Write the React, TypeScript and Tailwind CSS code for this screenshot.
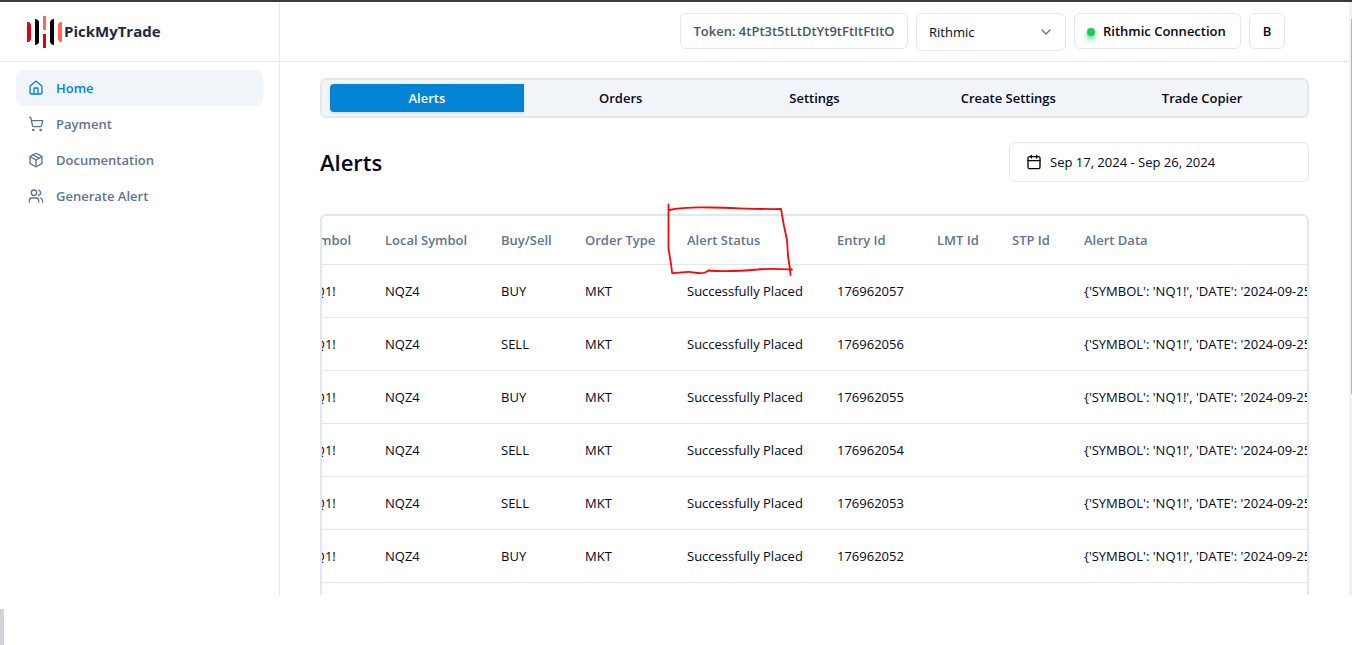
import React, { useLayoutEffect, useRef } from "react";
import {
  Calendar,
  ChevronDown,
  House,
  Package,
  ShoppingCart,
  Users,
} from "lucide-react";

const navItems = [
  { label: "Home", icon: House, active: true },
  { label: "Payment", icon: ShoppingCart },
  { label: "Documentation", icon: Package },
  { label: "Generate Alert", icon: Users },
];

const tabs = ["Alerts", "Orders", "Settings", "Create Settings", "Trade Copier"];

const columns = [
  { title: "Symbol", width: "w-[80px]" },
  { title: "Local Symbol", width: "w-[116px]" },
  { title: "Buy/Sell", width: "w-[84px]" },
  { title: "Order Type", width: "w-[102px]" },
  { title: "Alert Status", width: "w-[150px]" },
  { title: "Entry Id", width: "w-[100px]" },
  { title: "LMT Id", width: "w-[75px]" },
  { title: "STP Id", width: "w-[72px]" },
  { title: "Alert Data", width: "w-[640px]" },
];

const alerts = [
  { side: "BUY", entryId: "176962057" },
  { side: "SELL", entryId: "176962056" },
  { side: "BUY", entryId: "176962055" },
  { side: "SELL", entryId: "176962054" },
  { side: "SELL", entryId: "176962053" },
  { side: "BUY", entryId: "176962052" },
  { side: "SELL", entryId: "176962051" },
];

function Logo() {
  return (
    <svg width="36" height="32" viewBox="0 0 36 32" aria-hidden="true">
      <path d="M0 6h1.500q2.500 1 2.500 3v14q0 2-2.500 3H0z" fill="#d9040f" />
      <path d="M8 3h1q3 1 3 3v20q0 2-3 3H8z" fill="#050505" />
      <path d="M16 0h3v14h-3z" fill="#ff665c" />
      <path d="M16 18h3v14h-3z" fill="#d9040f" />
      <path d="M27 3h-1q-3 1-3 3v20q0 2 3 3h1z" fill="#050505" />
      <path d="M35 6h-1.500q-2.500 1-2.500 3v14q0 2 2.500 3h1.500z" fill="#ff665c" />
    </svg>
  );
}

function Sidebar() {
  return (
    <aside className="w-[280px] shrink-0 border-r border-slate-200">
      <div className="flex h-[60px] items-center border-b border-slate-200 px-[27px]">
        <a href="#" className="flex items-center gap-px text-[15px] font-bold text-slate-800">
          <Logo />
          <span>PickMyTrade</span>
        </a>
      </div>
      <nav className="px-4 py-2 text-[13px]/[21px] font-semibold">
        {navItems.map(({ label, icon: Icon, active }) => (
          <a
            key={label}
            href="#"
            className={
              active
                ? "flex h-9 items-center gap-3 rounded-lg bg-slate-100 px-3 text-[#0284d4]"
                : "flex h-9 items-center gap-3 rounded-lg px-3 text-slate-500"
            }
          >
            <Icon size={16} />
            {label}
          </a>
        ))}
      </nav>
    </aside>
  );
}

function Header() {
  return (
    <header className="flex h-[60px] shrink-0 items-center justify-end border-b border-slate-200 pr-16">
      <div className="flex items-start gap-2 text-[13px]/[21px]">
        <button className="h-9 w-[228px] rounded-md border border-slate-200 pt-0.5 font-semibold whitespace-nowrap text-gray-600">
          Token: 4tPt3t5tLtDtYt9tFtItFtItO
        </button>
        <div className="relative">
          <select
            aria-label="Broker"
            className="h-[38px] w-[150px] appearance-none rounded-md border border-slate-200 bg-white px-3 pt-0.5 text-slate-950"
          >
            <option>Rithmic</option>
          </select>
          <ChevronDown
            size={16}
            className="pointer-events-none absolute top-[11px] right-3 text-gray-500"
          />
        </div>
        <button className="flex h-9 w-[167px] items-center gap-2 rounded-md border border-slate-200 px-3 pt-0.5 font-semibold whitespace-nowrap text-slate-950">
          <span className="size-2 rounded-full bg-[#22c55e] shadow-md shadow-green-500" />
          Rithmic Connection
        </button>
        <button className="size-9 rounded-md border border-slate-200 pt-0.5 font-semibold text-slate-950">
          B
        </button>
      </div>
    </header>
  );
}

function Tabs() {
  return (
    <div
      role="tablist"
      className="flex h-10 items-center rounded-md border-2 border-gray-200 bg-slate-100 px-2 text-[13px]/[21px] font-semibold text-slate-950"
    >
      {tabs.map((tab, i) => (
        <button
          key={tab}
          role="tab"
          aria-selected={i === 0}
          className={
            i === 0
              ? "h-7 flex-1 rounded-l-sm bg-[#0284d4] text-white shadow-sm"
              : "h-7 flex-1"
          }
        >
          {tab}
        </button>
      ))}
    </div>
  );
}

// hand drawn marker around the "Alert Status" column title
function Marker() {
  return (
    <svg
      className="pointer-events-none absolute -top-3 left-[346px]"
      width="130"
      height="76"
      viewBox="0 0 130 76"
      fill="none"
      stroke="#f80808"
      strokeWidth="1.8"
      strokeLinecap="round"
      strokeLinejoin="round"
      aria-hidden="true"
    >
      <path d="M2.500 2.500V46.500L5 62L6 70" />
      <path d="M3 8C14 5.500 26 5 46 5.500C72 6 94 7.500 115 7L118 24L121 38L122 54L124 67L124.500 73" />
      <path d="M6 71C14 71.500 20 68.500 28 70.500C36 72 40 71 42 68.500C56 69.500 74 69 92 67.500C104 66 116 67 126 67.500" />
    </svg>
  );
}

function AlertsTable() {
  const scroller = useRef<HTMLDivElement>(null);

  // open with the left columns partly scrolled away
  useLayoutEffect(() => {
    if (scroller.current) scroller.current.scrollLeft = 33;
  }, []);

  return (
    <div className="relative mt-8">
      <div ref={scroller} className="overflow-x-auto rounded-md border-2 border-slate-200">
        <table className="w-[1419px] table-fixed text-left text-[13px]/[21px]">
          <thead>
            <tr className="h-12 border-b border-slate-200 text-slate-500">
              {columns.map((c) => (
                <th
                  key={c.title}
                  className={`${c.width} px-4 pt-0.5 font-semibold whitespace-nowrap`}
                >
                  {c.title}
                </th>
              ))}
            </tr>
          </thead>
          <tbody className="text-slate-950">
            {alerts.map((a) => (
              <tr key={a.entryId} className="h-[53px] border-b border-slate-200 whitespace-nowrap">
                <td className="px-4 pt-0.5">NQ1!</td>
                <td className="px-4 pt-0.5">NQZ4</td>
                <td className="px-4 pt-0.5">{a.side}</td>
                <td className="px-4 pt-0.5">MKT</td>
                <td className="px-4 pt-0.5">Successfully Placed</td>
                <td className="px-4 pt-0.5">{a.entryId}</td>
                <td className="px-4 pt-0.5"></td>
                <td className="px-4 pt-0.5"></td>
                <td className="px-4 pt-0.5">{"{'SYMBOL': 'NQ1!', 'DATE': '2024-09-25'}"}</td>
              </tr>
            ))}
          </tbody>
        </table>
      </div>
      <Marker />
    </div>
  );
}

export default function App() {
  return (
    <div className="flex h-screen flex-col bg-white font-['Segoe_UI','Open_Sans',sans-serif]">
      <div className="flex min-h-0 flex-1 overflow-hidden border-t-2 border-[#3b3b3b]">
        <Sidebar />
        <div className="flex min-w-0 flex-1 flex-col">
          <Header />
          <main className="min-h-0 flex-1 overflow-hidden px-10 pt-4">
            <Tabs />
            <div className="mt-6 flex items-center justify-between">
              <h1 className="text-[22px]/[34px] font-semibold text-slate-950">Alerts</h1>
              <button className="flex h-10 w-[300px] items-center gap-2 rounded-md border border-slate-200 px-4 text-[13px]/[21px] text-slate-950">
                <Calendar size={16} />
                Sep 17, 2024 - Sep 26, 2024
              </button>
            </div>
            <AlertsTable />
          </main>
        </div>
        <div className="w-[3px] shrink-0 bg-[#f1f1f1] pt-[17px]">
          <div className="ml-auto h-[375px] w-px bg-[#b4b4b4]" />
        </div>
      </div>
      <footer className="flex h-[50px] shrink-0 items-end">
        <div className="h-9 w-1 bg-[#d0d5da]" />
      </footer>
    </div>
  );
}
